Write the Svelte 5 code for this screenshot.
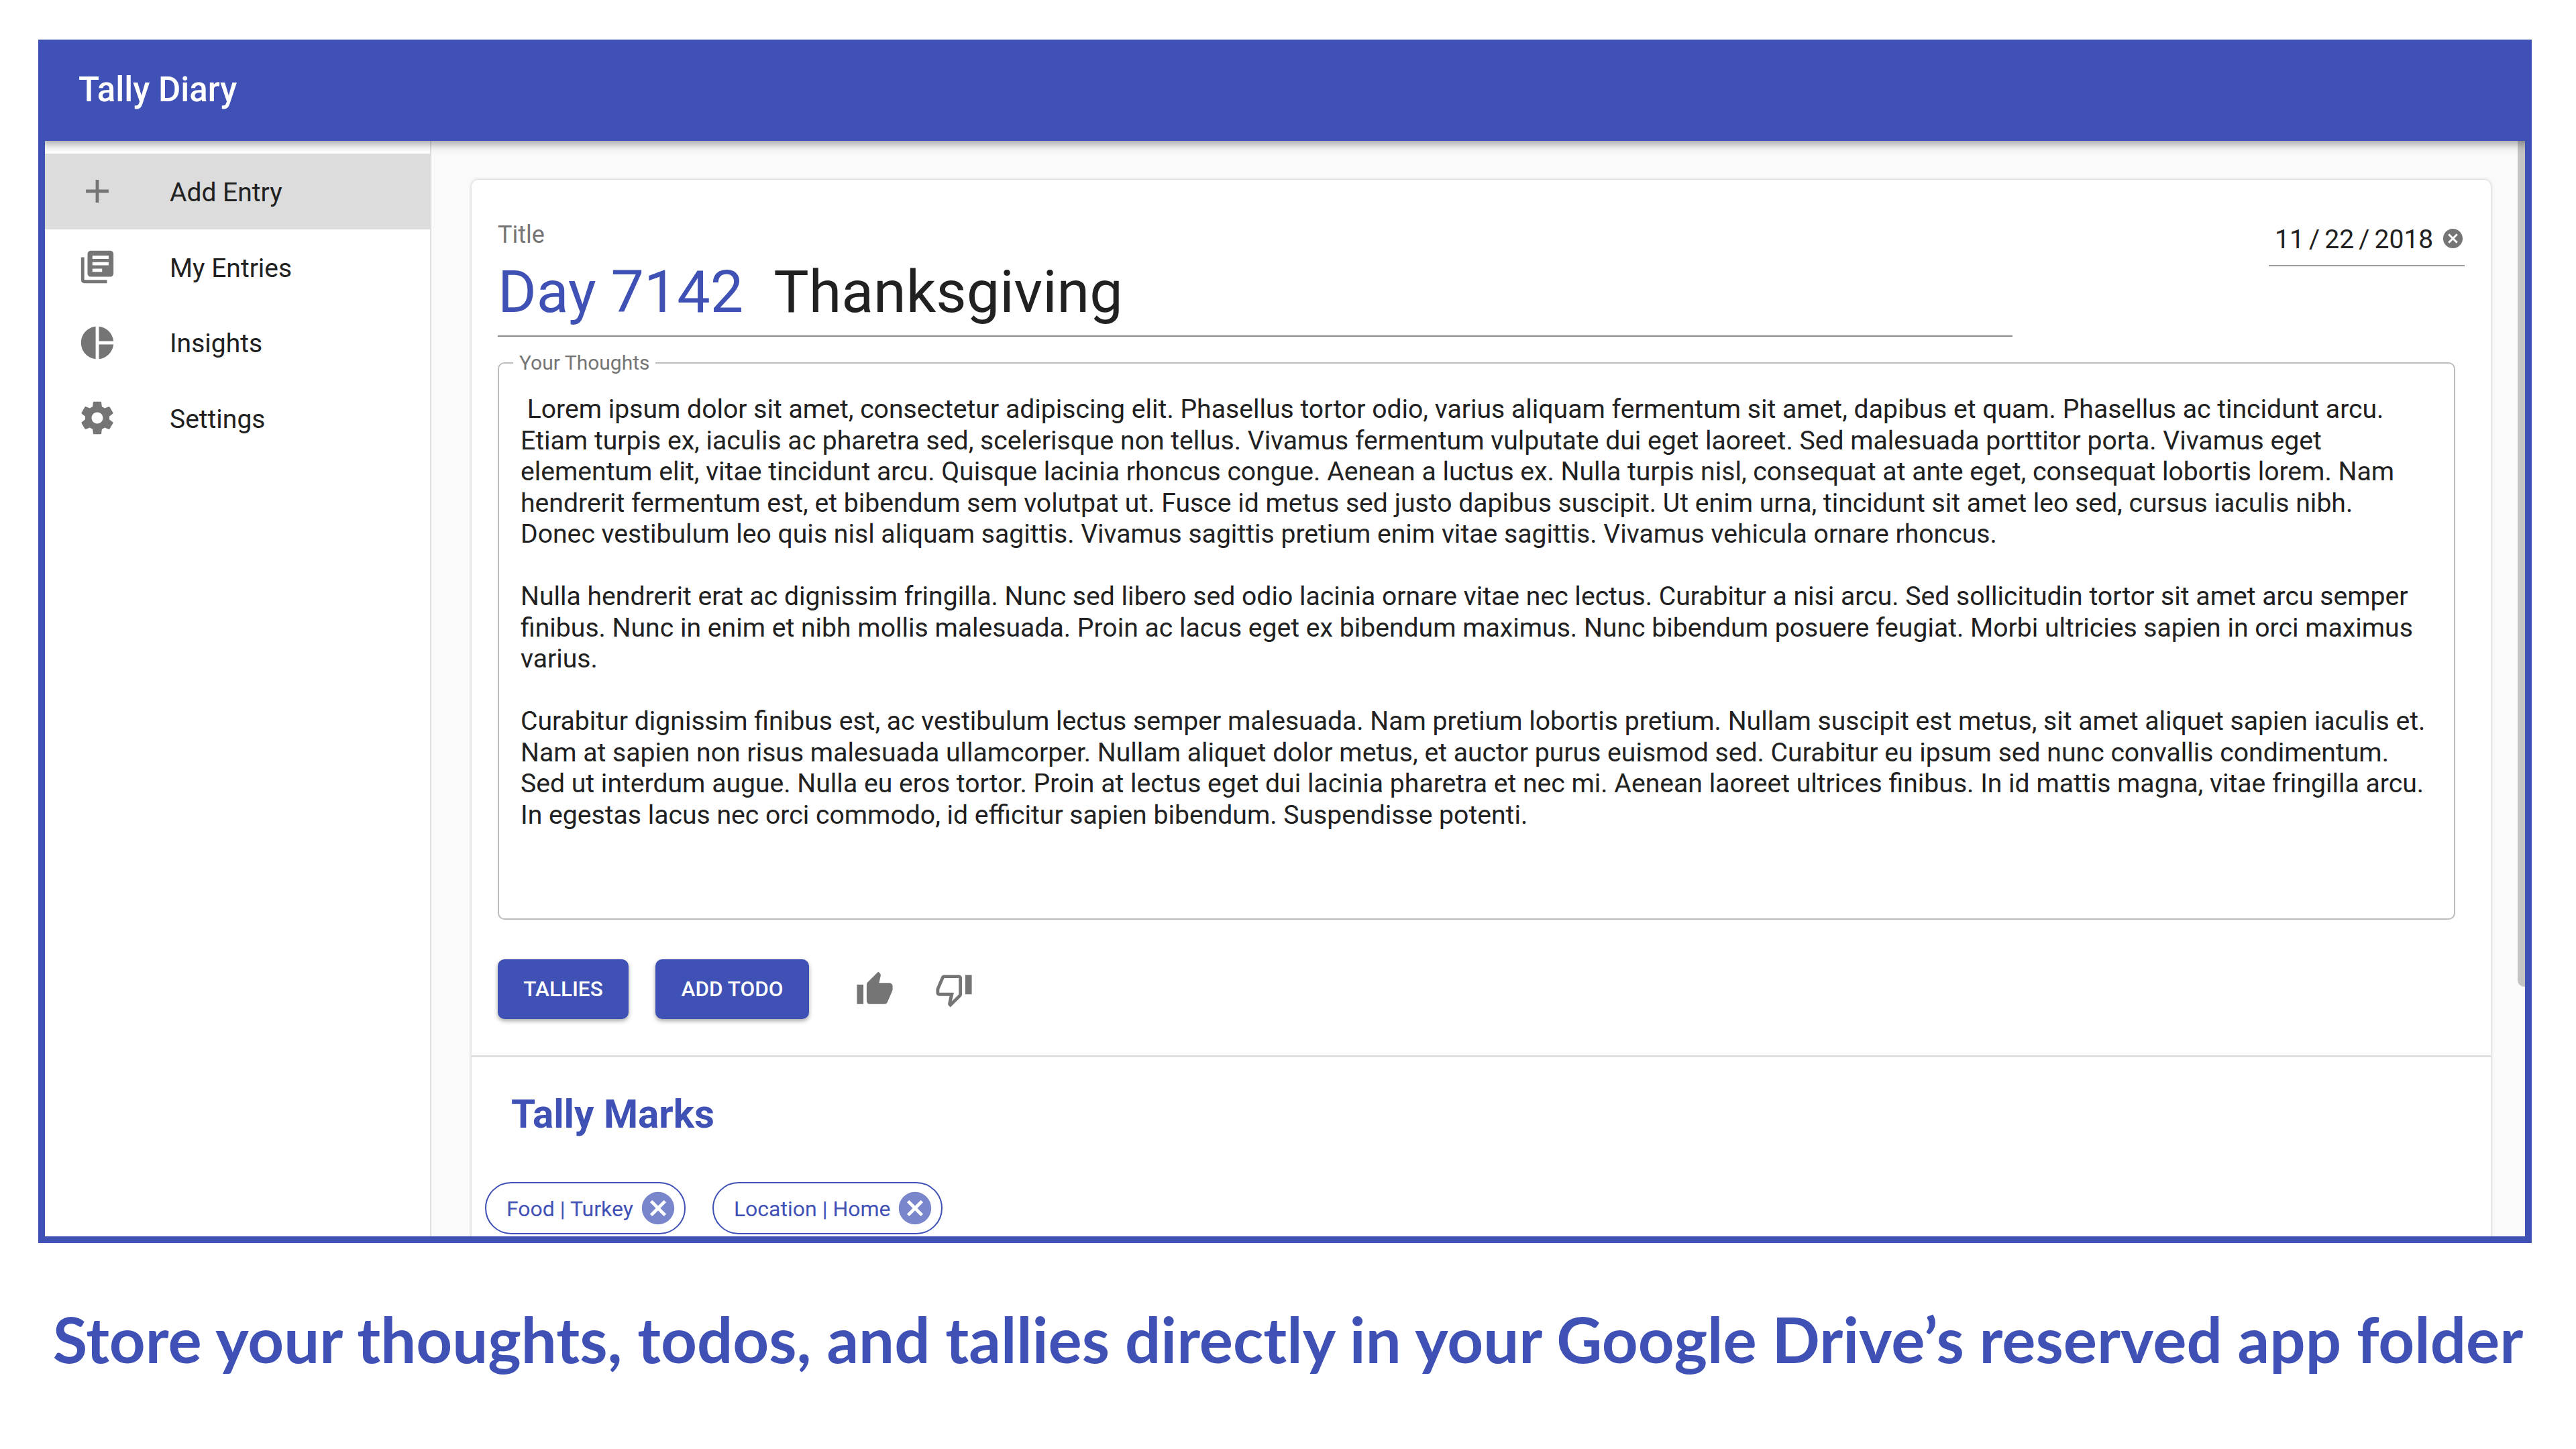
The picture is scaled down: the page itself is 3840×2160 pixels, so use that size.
<script>
  const nav = [
    { label: 'Add Entry', active: true, d: 'M19 13h-6v6h-2v-6H5v-2h6V5h2v6h6v2z' },
    { label: 'My Entries', d: 'M4 6H2v14c0 1.1.9 2 2 2h14v-2H4V6zm16-4H8c-1.1 0-2 .9-2 2v12c0 1.1.9 2 2 2h12c1.1 0 2-.9 2-2V4c0-1.1-.9-2-2-2zm-1 9H9V9h10v2zm-4 4H9v-2h6v2zm4-8H9V5h10v2z' },
    { label: 'Insights', d: 'M11 2v20c-5.07-.5-9-4.79-9-10s3.93-9.5 9-10zm2.03 0v8.99H22c-.47-4.74-4.24-8.52-8.97-8.99zm0 11.01V22c4.74-.47 8.5-4.25 8.97-8.99h-8.97z' },
    { label: 'Settings', d: 'M19.43 12.98c.04-.32.07-.64.07-.98s-.03-.66-.07-.98l2.11-1.65c.19-.15.24-.42.12-.64l-2-3.46c-.12-.22-.39-.3-.61-.22l-2.49 1c-.52-.4-1.08-.73-1.69-.98l-.38-2.65C14.46 2.18 14.25 2 14 2h-4c-.25 0-.46.18-.49.42l-.38 2.65c-.61.25-1.17.59-1.69.98l-2.49-1c-.23-.09-.49 0-.61.22l-2 3.46c-.13.22-.07.49.12.64l2.11 1.65c-.04.32-.07.65-.07.98s.03.66.07.98l-2.11 1.65c-.19.15-.24.42-.12.64l2 3.46c.12.22.39.3.61.22l2.49-1c.52.4 1.08.73 1.69.98l.38 2.65c.03.24.24.42.49.42h4c.25 0 .46-.18.49-.42l.38-2.65c.61-.25 1.17-.59 1.69-.98l2.49 1c.23.09.49 0 .61-.22l2-3.46c.12-.22.07-.49-.12-.64l-2.11-1.65zM12 15.5c-1.93 0-3.5-1.57-3.5-3.5s1.57-3.5 3.5-3.5 3.5 1.57 3.5 3.5-1.57 3.5-3.5 3.5z' }
  ];

  const cancel = 'M12 2C6.47 2 2 6.47 2 12s4.47 10 10 10 10-4.47 10-10S17.53 2 12 2zm5 13.59L15.59 17 12 13.41 8.41 17 7 15.59 10.59 12 7 8.41 8.41 7 12 10.59 15.59 7 17 8.41 13.41 12 17 15.59z';

  const thoughts = [
    ' Lorem ipsum dolor sit amet, consectetur adipiscing elit. Phasellus tortor odio, varius aliquam fermentum sit amet, dapibus et quam. Phasellus ac tincidunt arcu.',
    'Etiam turpis ex, iaculis ac pharetra sed, scelerisque non tellus. Vivamus fermentum vulputate dui eget laoreet. Sed malesuada porttitor porta. Vivamus eget',
    'elementum elit, vitae tincidunt arcu. Quisque lacinia rhoncus congue. Aenean a luctus ex. Nulla turpis nisl, consequat at ante eget, consequat lobortis lorem. Nam',
    'hendrerit fermentum est, et bibendum sem volutpat ut. Fusce id metus sed justo dapibus suscipit. Ut enim urna, tincidunt sit amet leo sed, cursus iaculis nibh.',
    'Donec vestibulum leo quis nisl aliquam sagittis. Vivamus sagittis pretium enim vitae sagittis. Vivamus vehicula ornare rhoncus.',
    ' ',
    'Nulla hendrerit erat ac dignissim fringilla. Nunc sed libero sed odio lacinia ornare vitae nec lectus. Curabitur a nisi arcu. Sed sollicitudin tortor sit amet arcu semper',
    'finibus. Nunc in enim et nibh mollis malesuada. Proin ac lacus eget ex bibendum maximus. Nunc bibendum posuere feugiat. Morbi ultricies sapien in orci maximus',
    'varius.',
    ' ',
    'Curabitur dignissim finibus est, ac vestibulum lectus semper malesuada. Nam pretium lobortis pretium. Nullam suscipit est metus, sit amet aliquet sapien iaculis et.',
    'Nam at sapien non risus malesuada ullamcorper. Nullam aliquet dolor metus, et auctor purus euismod sed. Curabitur eu ipsum sed nunc convallis condimentum.',
    'Sed ut interdum augue. Nulla eu eros tortor. Proin at lectus eget dui lacinia pharetra et nec mi. Aenean laoreet ultrices finibus. In id mattis magna, vitae fringilla arcu.',
    'In egestas lacus nec orci commodo, id efficitur sapien bibendum. Suspendisse potenti.'
  ];

  const chips = ['Food | Turkey', 'Location | Home'];
</script>

<div class="shot">
  <div class="frame">
    <header class="bar">Tally Diary</header>
    <div class="body">
      <nav class="side">
        {#each nav as item}
          <div class="row" class:active={item.active}>
            <svg class="nav-icon" viewBox="0 0 24 24"><path d={item.d} /></svg>
            <span>{item.label}</span>
          </div>
        {/each}
      </nav>
      <main class="main">
        <div class="scroll"></div>
        <section class="card">
          <div class="title-row">
            <div class="title-field">
              <div class="title-label">Title</div>
              <div class="title-input"><span class="day">Day 7142</span><span class="name">Thanksgiving</span></div>
            </div>
            <div class="date">
              <span>11 / 22 / 2018</span>
              <svg class="date-clear" viewBox="0 0 24 24"><path d={cancel} /></svg>
            </div>
          </div>

          <fieldset class="thoughts">
            <legend>Your Thoughts</legend>
            {#each thoughts as line}
              <div class="line">{line}</div>
            {/each}
          </fieldset>

          <div class="actions">
            <button class="btn tallies">TALLIES</button>
            <button class="btn todo">ADD TODO</button>
            <svg class="thumb up" viewBox="0 0 24 24"><path d="M1 21h4V9H1v12zm22-11c0-1.1-.9-2-2-2h-6.31l.95-4.57.03-.32c0-.41-.17-.79-.44-1.06L14.17 1 7.59 7.59C7.22 7.95 7 8.45 7 9v10c0 1.1.9 2 2 2h9c.83 0 1.54-.5 1.84-1.22l3.02-7.05c.09-.23.14-.47.14-.73v-2z" /></svg>
            <svg class="thumb down" viewBox="0 0 24 24"><path d="M15 3H6c-.83 0-1.54.5-1.84 1.22l-3.02 7.05c-.09.23-.14.47-.14.73v2c0 1.1.9 2 2 2h6.31l-.95 4.57-.03.32c0 .41.17.79.44 1.06L9.83 23l6.59-6.59c.36-.36.58-.86.58-1.41V5c0-1.1-.9-2-2-2zm0 12l-4.34 4.34L12 14H3v-2l3-7h9v10zm4-12h4v12h-4z" /></svg>
          </div>

          <div class="tally">
            <h2>Tally Marks</h2>
            <div class="chips">
              {#each chips as chip}
                <div class="chip">
                  <span>{chip}</span>
                  <svg viewBox="0 0 24 24"><path d={cancel} /></svg>
                </div>
              {/each}
            </div>
          </div>
        </section>
      </main>
    </div>
  </div>
  <p class="caption">Store your thoughts, todos, and tallies directly in your Google Drive’s reserved app folder</p>
</div>

<style>
  :global(body) { margin: 0; background: #fff; }

  .shot {
    width: 3840px;
    height: 2160px;
    padding: 59px 0 0 57px;
    box-sizing: border-box;
    font-family: Roboto, sans-serif;
    color: #212121;
    overflow: hidden;
  }

  .frame {
    width: 3717px;
    height: 1794px;
    box-sizing: border-box;
    border: solid #3f51b5;
    border-width: 0 10px 10px;
    display: flex;
    flex-direction: column;
    overflow: hidden;
  }

  .bar {
    height: 151px;
    margin: 0 -10px;
    padding-left: 60px;
    padding-bottom: 3px;
    box-sizing: border-box;
    flex: none;
    display: flex;
    align-items: center;
    background: #3f51b5;
    color: #fff;
    font-size: 51px;
    font-weight: 500;
    box-shadow: 0 4px 14px rgba(0, 0, 0, 0.4);
    position: relative;
    z-index: 2;
  }

  .body { flex: 1; display: flex; min-height: 0; }

  .side {
    width: 576px;
    flex: none;
    box-sizing: border-box;
    padding-top: 19px;
    background: #fff;
    border-right: 2px solid #e0e0e0;
  }

  .row {
    height: 112.7px;
    display: flex;
    align-items: center;
    padding-left: 49px;
    gap: 79px;
    font-size: 39px;
  }
  .row span { padding-top: 3px; }
  .row.active { background: #dcdcdc; }
  .nav-icon { width: 58px; height: 58px; fill: #757575; flex: none; }

  .main {
    flex: 1;
    position: relative;
    background: #fafafa;
    padding: 58px 51px 0 60px;
    min-width: 0;
  }

  .scroll {
    position: absolute;
    top: 0;
    right: 0;
    width: 11px;
    height: 1261px;
    background: #c4c4c4;
    border-radius: 0 0 0 10px;
  }

  .card {
    height: 1800px;
    background: #fff;
    border-radius: 10px 10px 0 0;
    box-shadow: 0 0 5px rgba(0, 0, 0, 0.22);
  }

  .title-row {
    display: flex;
    justify-content: space-between;
    align-items: flex-start;
    padding: 57px 39px 0;
  }

  .title-field { width: 2258px; border-bottom: 2px solid #8a8a8a; padding-bottom: 15px; }
  .title-label { font-size: 36px; line-height: 50px; color: #757575; margin-bottom: 10px; }
  .title-input { font-size: 88px; line-height: 100px; display: flex; gap: 45px; }
  .day { color: #3f51b5; }

  .date {
    width: 283px;
    height: 50px;
    margin: 5px 0 0 auto;
    padding: 0 0 15px 9px;
    border-bottom: 2px solid #9e9e9e;
    display: flex;
    align-items: center;
    gap: 12px;
    font-size: 39px;
    word-spacing: -2.5px;
    line-height: 50px;
    white-space: nowrap;
  }
  .date span { padding-top: 3px; }
  .date-clear { width: 35px; height: 35px; fill: #757575; flex: none; }

  .thoughts {
    margin: 21px 53px 0 39px;
    padding: 28px 32px 0;
    height: 848px;
    box-sizing: border-box;
    border: 2px solid #bdbdbd;
    border-radius: 10px;
    min-width: 0;
    font-size: 39.15px;
    line-height: 46.5px;
  }
  .thoughts legend {
    margin-left: -11px;
    padding: 0 9px;
    font-size: 30px;
    line-height: 36px;
    color: #757575;
  }
  .line { white-space: pre; }

  .actions {
    display: flex;
    align-items: center;
    margin: 59px 0 0 39px;
    height: 89px;
  }

  .btn {
    height: 89px;
    border: 0;
    padding: 0;
    background: #3f51b5;
    color: #fff;
    border-radius: 10px;
    font: 500 31.5px Roboto, sans-serif;
    box-shadow: 0 3px 6px rgba(0, 0, 0, 0.35);
  }
  .tallies { width: 195px; margin-right: 40px; }
  .todo { width: 229px; }

  .thumb { width: 58px; height: 58px; fill: #757575; flex: none; }
  .up { margin-left: 69px; }
  .down { margin-left: 60px; }

  .tally { margin-top: 54px; border-top: 3px solid #e0e0e0; }
  .tally h2 {
    margin: 0;
    padding: 50px 0 0 59px;
    font-size: 58.4px;
    font-weight: 700;
    line-height: 70px;
    color: #3f51b5;
  }

  .chips { display: flex; gap: 40px; margin: 66px 0 0 20px; }

  .chip {
    height: 78px;
    box-sizing: border-box;
    border: 2px solid #3f51b5;
    border-radius: 39px;
    padding: 0 10px 0 30px;
    display: flex;
    align-items: center;
    gap: 8px;
    font-size: 32px;
    color: #3f51b5;
  }
  .chip span { padding-top: 2px; }
  .chip svg { width: 58px; height: 58px; fill: #7986cb; flex: none; }

  .caption {
    margin: 90px 0 0 -57px;
    width: 3840px;
    text-align: center;
    font-family: Lato, sans-serif;
    font-weight: 700;
    font-size: 94px;
    line-height: 106px;
    color: #3f51b5;
    white-space: nowrap;
  }
</style>
